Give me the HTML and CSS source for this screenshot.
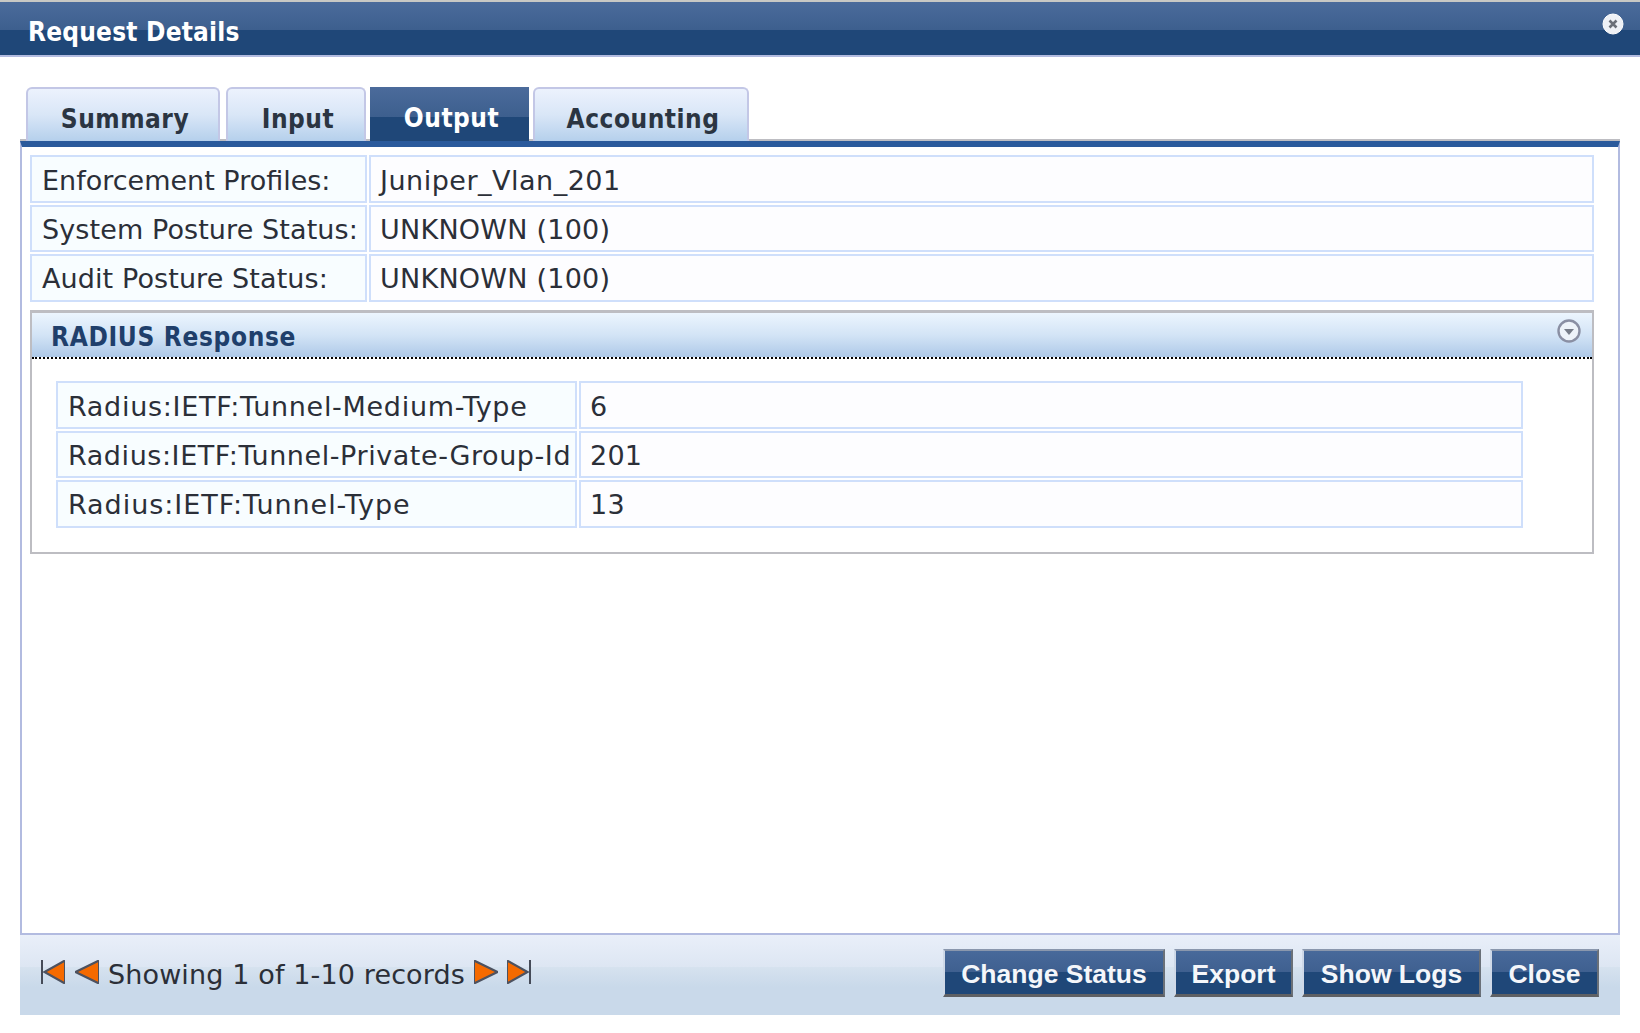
FILE: index.html
```html
<!DOCTYPE html>
<html lang="en">
<head>
<meta charset="utf-8">
<title>Request Details</title>
<link rel="stylesheet" href="styles.css">
</head>
<body>
<header class="titlebar">
  <h1 class="title">Request Details</h1>
  <svg class="close-icon" viewBox="0 0 22 22" width="22" height="22" aria-hidden="true">
    <circle cx="11" cy="11" r="10" fill="#eef1f6" stroke="#fff" stroke-width="1"/>
    <path d="M7.5 7.5 14.5 14.5M14.5 7.5 7.5 14.5" stroke="#6a6f78" stroke-width="2.6" fill="none"/>
  </svg>
</header>
<div class="dialog">
  <nav class="tabs">
    <a class="tab tab-summary">Summary</a>
    <a class="tab tab-input">Input</a>
    <a class="tab tab-output active">Output</a>
    <a class="tab tab-accounting">Accounting</a>
  </nav>
  <main class="content">
    <div class="grid grid-top">
      <div class="cell label">Enforcement Profiles:</div><div class="cell value sp-j">Juniper_Vlan_201</div>
      <div class="cell label sp-b">System Posture Status:</div><div class="cell value sp-u">UNKNOWN (100)</div>
      <div class="cell label sp-b">Audit Posture Status:</div><div class="cell value sp-u">UNKNOWN (100)</div>
    </div>
    <section class="panel">
      <div class="panel-head">
        <h2 class="panel-title">RADIUS Response</h2>
        <svg class="toggle" viewBox="0 0 24 24" width="24" height="24" aria-hidden="true">
          <circle cx="12" cy="12" r="10.5" fill="#eef3f9" stroke="#8a8fa3" stroke-width="2.4"/>
          <path d="M7 10h10l-5 6z" fill="#777c88"/>
        </svg>
      </div>
      <div class="panel-body">
        <div class="grid grid-inner">
          <div class="cell label sp-c">Radius:IETF:Tunnel-Medium-Type</div><div class="cell value sp-u">6</div>
          <div class="cell label sp-d">Radius:IETF:Tunnel-Private-Group-Id</div><div class="cell value sp-u">201</div>
          <div class="cell label sp-e">Radius:IETF:Tunnel-Type</div><div class="cell value sp-u">13</div>
        </div>
      </div>
    </section>
  </main>
  <footer class="footer">
    <div class="pager">
      <svg class="nav" viewBox="0 0 24 24" width="24" height="24" aria-hidden="true"><path d="M1 0v24" stroke="#454b58" stroke-width="2"/><path d="M23.5 1 3.5 12 23.5 23z" fill="#f56a00" stroke="#4d5260" stroke-width="1"/><path d="M24 .5 3.5 12 24 23.5" fill="none" stroke="#4d5260" stroke-width="2.2"/></svg>
      <svg class="nav nav-prev" viewBox="0 0 24 24" width="24" height="24" aria-hidden="true"><path d="M23.5 1 .5 12 23.5 23z" fill="#f56a00" stroke="#4d5260" stroke-width="1"/><path d="M24 .5 .5 12 24 23.5" fill="none" stroke="#4d5260" stroke-width="2.2"/></svg>
      <span class="pager-text">Showing 1 of 1-10 records</span>
      <svg class="nav nav-next" viewBox="0 0 24 24" width="24" height="24" aria-hidden="true"><path d="M.5 1 23.5 12 .5 23z" fill="#f56a00" stroke="#4d5260" stroke-width="1"/><path d="M0 .5 23.5 12 0 23.5" fill="none" stroke="#4d5260" stroke-width="2.2"/></svg>
      <svg class="nav nav-last" viewBox="0 0 24 24" width="24" height="24" aria-hidden="true"><path d="M.5 1 20.5 12 .5 23z" fill="#f56a00" stroke="#4d5260" stroke-width="1"/><path d="M0 .5 20.5 12 0 23.5" fill="none" stroke="#4d5260" stroke-width="2.2"/><path d="M23 0v24" stroke="#454b58" stroke-width="2"/></svg>
    </div>
    <div class="actions">
      <button class="btn btn-status">Change Status</button>
      <button class="btn btn-export">Export</button>
      <button class="btn btn-logs">Show Logs</button>
      <button class="btn btn-close">Close</button>
    </div>
  </footer>
</div>
</body>
</html>
```
FILE: styles.css
```css
* { box-sizing: border-box; }
html, body { margin: 0; padding: 0; background: #fff; }
body {
  height: 1033px;
  overflow: hidden;
  font-family: "DejaVu Sans", Verdana, sans-serif;
  font-stretch: condensed;
  color: #2b2f38;
}
.titlebar {
  height: 57px;
  border-top: 2px solid #c8c8c4;
  border-bottom: 2px solid #b2bbe0;
  background: linear-gradient(to bottom, #4b6b9b 0, #3d5f8e 28px, #1f4778 28px, #1f4778 100%);
  display: flex;
  align-items: center;
  justify-content: space-between;
  padding: 0 16px 0 28px;
}
.title {
  margin: 7px 0 0;
  font-size: 26px;
  font-weight: bold;
  letter-spacing: 0.2px;
  color: #fff;
}
.close-icon { margin-bottom: 10px; margin-right: 0; }
.dialog { margin: 0 20px; width: 1600px; }
.tabs {
  display: flex;
  align-items: flex-end;
  height: 54px;
  margin-top: 30px;
  padding-left: 6px;
  gap: 6px;
  background: linear-gradient(to top, #bdbdc2 0, #bdbdc2 2px, transparent 2px);
}
.tab {
  height: 54px;
  display: flex;
  align-items: center;
  justify-content: center;
  padding: 8px 0 0 4px;
  font-size: 26px;
  font-weight: bold;
  letter-spacing: 0.5px;
  color: #2b3542;
  border: 2px solid #c3c7e6;
  border-bottom: 0;
  border-radius: 6px 6px 0 0;
  background: linear-gradient(to bottom, #ecf2fd 0, #d9e6f7 50%, #b5d0ec 100%);
}
.tab-summary { width: 194px; }
.tab-input { width: 140px; margin-right: -2px; }
.tab-output { width: 159px; margin-right: -2px; }
.tab-accounting { width: 216px; }
.tab.active {
  color: #fff;
  border: 0;
  border-radius: 0;
  background: linear-gradient(to bottom, #4b6b9b 0, #3d5f8e 55%, #1f4778 55%, #1f4778 100%);
}
.content {
  height: 794px;
  border: 2px solid #b2bbe0;
  border-top: 6px solid #2a5a9c;
  padding: 8px 24px 0 8px;
}
.grid {
  display: grid;
  grid-auto-rows: 47.5px;
  gap: 2px;
}
.grid-top { grid-template-columns: 337px 1fr; }
.grid-inner { grid-template-columns: 521px 1fr; }
.cell {
  display: flex;
  align-items: center;
  padding: 3px 0 0 10px;
  font-size: 27px;
  font-stretch: normal;
  border: 2px solid #cfdffb;
  white-space: nowrap;
}
.grid .cell:nth-last-child(-n+2) { padding-top: 2px; }
.label { background: #f8fdff; }
.value { background: #fdfdff; padding-left: 9px; }
.sp-b { letter-spacing: 0.1px; }
.sp-c { letter-spacing: 0.7px; }
.sp-d { letter-spacing: 0.57px; }
.sp-e { letter-spacing: 0.95px; }
.sp-j { letter-spacing: 0.5px; }
.sp-u { letter-spacing: 0.24px; }
.panel {
  margin-top: 8.5px;
  border: 2px solid #bdbdc2;
  border-top-width: 3px;
}
.panel-head {
  height: 44px;
  display: flex;
  align-items: center;
  justify-content: space-between;
  padding: 0 11px 0 19px;
  background: linear-gradient(to bottom, #ecf5fe 0, #d3e4f6 50%, #aec9e8 100%);
}
.panel-title {
  margin: 0;
  font-size: 26px;
  font-weight: bold;
  letter-spacing: 0.65px;
  color: #203f6b;
  padding-top: 3px;
}
.toggle { margin-bottom: 9px; }
.panel-body {
  border-top: 2px dotted #000;
  padding: 22px 69px 24px 24px;
}
.footer {
  height: 80px;
  display: flex;
  align-items: flex-start;
  justify-content: space-between;
  padding: 14px 21px 0 21px;
  background: linear-gradient(to bottom, #e9eff9 0, #dde6f3 40%, #d6e2ef 40%, #c9d9ea 65%, #c9d9ea 100%);
}
.pager {
  display: flex;
  align-items: flex-start;
  padding-top: 11px;
}
.nav { flex: none; }
.nav-prev { margin-left: 10px; }
.nav-next { margin-left: 9px; }
.nav-last { margin-left: 9px; }
.pager-text {
  margin-left: 9px;
  font-size: 27px;
  font-stretch: normal;
  line-height: 30px;
  letter-spacing: 0.13px;
}
.actions { display: flex; gap: 9px; }
.btn {
  height: 48px;
  padding: 3px 0 0;
  font-family: "Liberation Sans", Arial, sans-serif;
  font-stretch: normal;
  font-size: 26.5px;
  font-weight: bold;
  color: #f4f6fa;
  border: 0;
  border-top: 2px solid #8a97ad;
  border-left: 2px solid #cfd9e8;
  border-right: 2px solid #6a7078;
  border-bottom: 3px solid #5e6064;
  background: linear-gradient(to bottom, #48699a 0, #3f6090 48%, #1f4778 48%, #1f4778 100%);
}
.btn-status { width: 222px; }
.btn-export { width: 119px; }
.btn-logs { width: 179px; }
.btn-close { width: 109px; }
```
